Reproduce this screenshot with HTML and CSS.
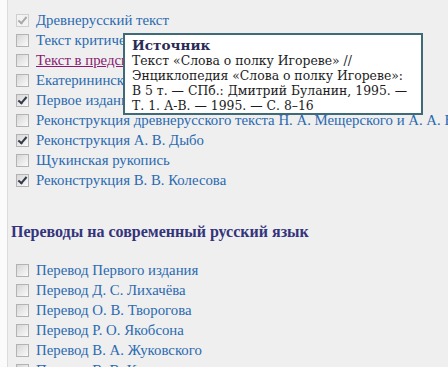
FILE: index.html
```html
<!DOCTYPE html>
<html>
<head>
  <meta charset="utf-8">
  <title>Слово о полку Игореве — тексты</title>
  <link rel="stylesheet" href="styles.css">
</head>
<body>

<div class="page">

  <ul class="texts">
    <li><label><input type="checkbox" class="muted" checked disabled> <span class="link">Древнерусский текст</span></label></li>
    <li><label><input type="checkbox"> <span class="link">Текст критический</span></label></li>
    <li><label><input type="checkbox"> <span class="link visited">Текст в предсказании</span></label></li>
    <li><label><input type="checkbox"> <span class="link">Екатерининская копия</span></label></li>
    <li><label><input type="checkbox" checked> <span class="link">Первое издание</span></label></li>
    <li><label><input type="checkbox"> <span class="link">Реконструкция древнерусского текста Н. А. Мещерского и А. А. Бурыкина</span></label></li>
    <li><label><input type="checkbox" checked> <span class="link">Реконструкция А. В. Дыбо</span></label></li>
    <li><label><input type="checkbox"> <span class="link">Щукинская рукопись</span></label></li>
    <li><label><input type="checkbox" checked> <span class="link">Реконструкция В. В. Колесова</span></label></li>
  </ul>

  <h3 class="group-title">Переводы на современный русский язык</h3>

  <ul class="texts">
    <li><label><input type="checkbox"> <span class="link">Перевод Первого издания</span></label></li>
    <li><label><input type="checkbox"> <span class="link">Перевод Д. С. Лихачёва</span></label></li>
    <li><label><input type="checkbox"> <span class="link">Перевод О. В. Творогова</span></label></li>
    <li><label><input type="checkbox"> <span class="link">Перевод Р. О. Якобсона</span></label></li>
    <li><label><input type="checkbox"> <span class="link">Перевод В. А. Жуковского</span></label></li>
    <li><label><input type="checkbox"> <span class="link">Перевод В. В. Капниста</span></label></li>
  </ul>

  <div class="tooltip">
    <div class="tooltip-title">Источник</div>
    <div>Текст «Слова о полку Игореве» //</div>
    <div>Энциклопедия «Слова о полку Игореве»:</div>
    <div>В 5 т. — СПб.: Дмитрий Буланин, 1995. —</div>
    <div>Т. 1. А-В. — 1995. — С. 8–16</div>
  </div>

</div>

</body>
</html>
```

FILE: styles.css
```css
html, body {
  margin: 0;
  padding: 0;
  background: #fbfbfb;
  height: 100%;
  overflow: hidden;
}

.page {
  position: relative;
  margin-left: 7px;
  min-height: 100%;
  border-left: 1px solid #dcdcdc;
  background: #efefef;
  font-family: "Liberation Serif", "Times New Roman", serif;
  font-size: 14.8px;
  padding-top: 10px;
}

.texts {
  list-style: none;
  margin: 0;
  padding: 0 0 0 8px;
}

.texts li {
  height: 20px;
  line-height: 20px;
  white-space: nowrap;
}

.texts label {
  display: flex;
  align-items: center;
  gap: 7px;
}

.link {
  color: #2a6ab0;
}

.link.visited {
  color: #8a1a70;
  text-decoration: underline;
}

input[type="checkbox"] {
  appearance: none;
  -webkit-appearance: none;
  position: relative;
  margin: 0;
  width: 13px;
  height: 13px;
  border: 1px solid #b3b3b3;
  background: linear-gradient(135deg, #d6d6d6, #fafafa);
  flex: none;
}

input[type="checkbox"]:checked::after {
  content: "";
  position: absolute;
  left: 3px;
  top: 0px;
  width: 3px;
  height: 7px;
  border: solid #333b4a;
  border-width: 0 2px 2px 0;
  transform: rotate(40deg);
}

input.muted:checked::after {
  border-color: #a9a9a9;
}

input.muted {
  border-color: #cfcfcf;
  background: #f2f2f2;
}

.group-title {
  margin: 33px 0 19px 3px;
  height: 18px;
  line-height: 18px;
  font-size: 16px;
  font-weight: bold;
  color: #34347c;
}

.tooltip {
  position: absolute;
  left: 115px;
  top: 33px;
  width: 287px;
  padding: 2px 2px 0 7px;
  border: 2px solid #3f6a78;
  background: #fff;
  color: #1c1c1c;
  font-family: "DejaVu Serif", Georgia, serif;
  font-size: 12.4px;
  line-height: 15px;
  white-space: nowrap;
}

.tooltip-title {
  font-weight: bold;
  font-size: 13.6px;
  line-height: 16px;
  color: #2b2b55;
}
```
